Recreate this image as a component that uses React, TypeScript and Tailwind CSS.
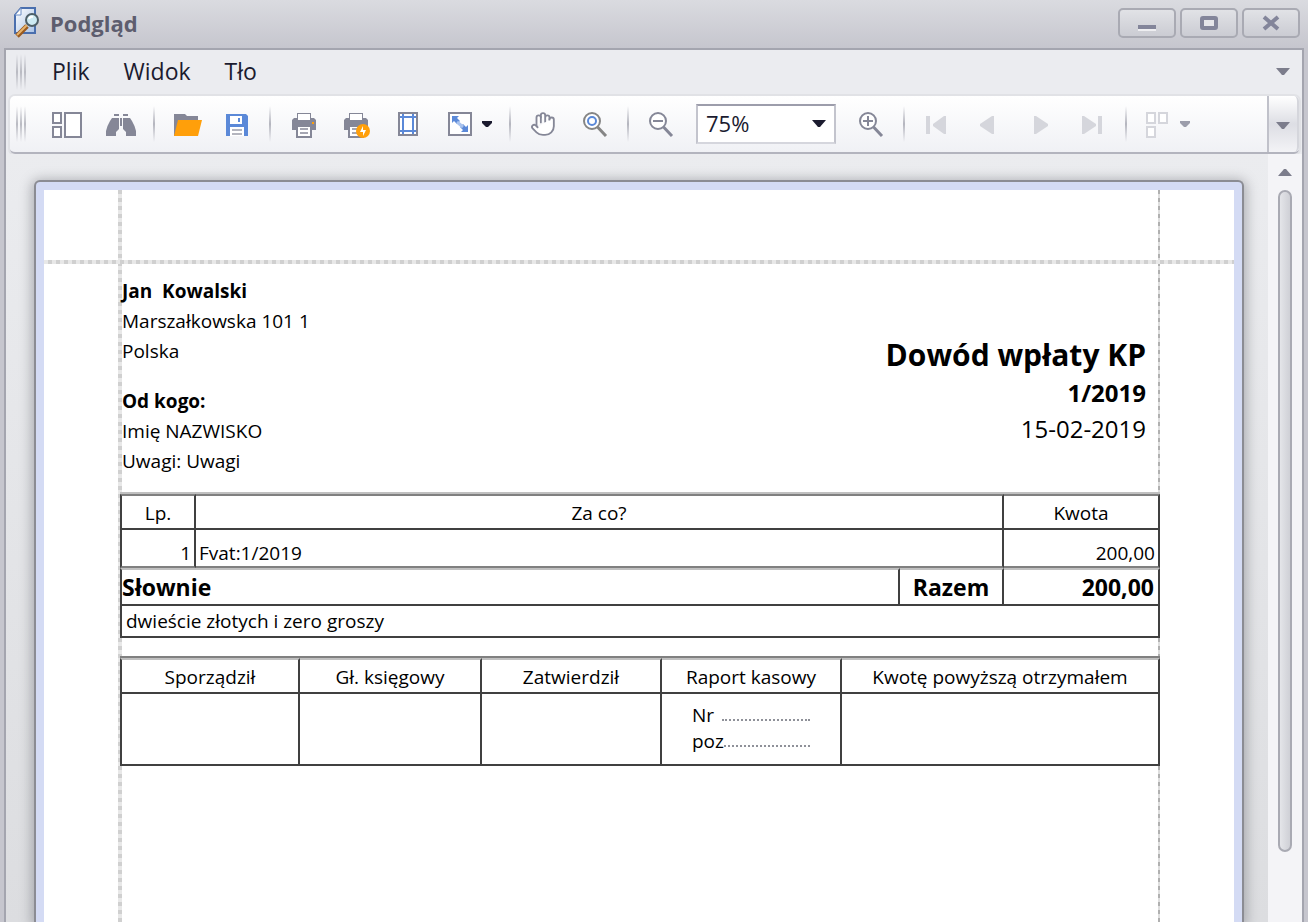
import React from 'react';
import { Hand } from 'lucide-react';

const Separator: React.FC = () => (
  <div className="mx-[17px] h-9 w-0.5 shrink-0 bg-linear-to-b from-transparent via-[#b4b5be] to-transparent"></div>
);

const Grip: React.FC = () => (
  <div className="flex h-9 shrink-0 gap-0.5">
    {Array.from({ length: 3 }).map((_, i) => (
      <div key={i} className="w-0.5 bg-linear-to-b from-transparent via-[#b9bac2] to-transparent"></div>
    ))}
  </div>
);

interface ToolButtonProps {
  label: string;
  children: React.ReactNode;
  disabled?: boolean;
}

const ToolButton: React.FC<ToolButtonProps> = ({ label, children, disabled }) => (
  <button type="button" aria-label={label} title={label} disabled={disabled} className="shrink-0">
    {children}
  </button>
);

const Icon: React.FC<{ children: React.ReactNode }> = ({ children }) => (
  <svg width="30" height="26" viewBox="0 0 30 26" fill="none" aria-hidden="true" className="mt-0.5">
    {children}
  </svg>
);

const SmallCaret: React.FC<{ color: string }> = ({ color }) => (
  <svg width="10" height="6" viewBox="0 0 10 6" aria-hidden="true">
    <path d="M0 0H10V2L6 6H4L0 2Z" fill={color} />
  </svg>
);

const Caret: React.FC<{ color: string; up?: boolean }> = ({ color, up }) => (
  <svg width="14" height="8" viewBox="0 0 14 8" aria-hidden="true">
    <path d={up ? 'M0 8H14L8 1H6Z' : 'M0 0H14L8 7H6Z'} fill={color} />
  </svg>
);

const PrinterShape: React.FC = () => (
  <>
    <path d="M4 6H7V1H21V6H24L26 8V18H2V8Z" fill="#858797" />
    <rect x="8" y="2" width="12" height="6" fill="#fff" />
    <path d="M7 14H21V25H7Z" fill="#fff" stroke="#858797" strokeWidth="2" />
    <path d="M10 17H18M10 21H18" stroke="#a5a6b2" strokeWidth="2" />
  </>
);

const Magnifier: React.FC<{ children?: React.ReactNode; color?: string }> = ({ children, color = '#858797' }) => (
  <Icon>
    <circle cx="12" cy="9" r="8" fill="#fff" stroke={color} strokeWidth="2" />
    <path d="M17.5 15L26 24" stroke={color} strokeWidth="3" />
    {children}
  </Icon>
);

const AppIcon: React.FC = () => (
  <svg width="28" height="32" viewBox="0 0 28 32" aria-hidden="true">
    <defs>
      <linearGradient id="sheet" x1="0" y1="0" x2="1" y2="1">
        <stop offset="0" stopColor="#ffffff" />
        <stop offset="1" stopColor="#a9c2e6" />
      </linearGradient>
    </defs>
    <path d="M9 1H23V26H3V8Z" fill="url(#sheet)" stroke="#4a6fae" strokeWidth="2" />
    <path d="M3 8H9V1Z" fill="#fff" stroke="#6a8cc4" strokeWidth="1" />
    <path d="M15 19L5 29" stroke="#9a5b20" strokeWidth="5" />
    <path d="M15 18L5 28" stroke="#e8b46c" strokeWidth="2" />
    <circle cx="20" cy="13" r="6" fill="#cdeaf3" stroke="#4e5f68" strokeWidth="2" />
    <path d="M17 12Q18 9 21 10" stroke="#fff" strokeWidth="2" fill="none" />
  </svg>
);

const TitleBar: React.FC = () => {
  const button =
    'flex h-[30px] w-[58px] items-center justify-center rounded-[5px] border-2 border-[#a9aab3] bg-linear-to-b from-[#e1e2e6] to-[#cbccd3]';
  return (
    <header className="flex h-12 shrink-0 items-center bg-linear-to-b from-[#dadbe0] to-[#c6c6ce] pr-2 pb-0.5 pl-3">
      <AppIcon />
      <h1 className="ml-2.5 flex-1 text-[22px] leading-7 font-bold text-[#5d5d6e]">Podgląd</h1>
      <div className="flex gap-1">
        <button type="button" aria-label="Minimalizuj" className={button}>
          <svg width="18" height="16" viewBox="0 0 18 16" aria-hidden="true">
            <path d="M0 14H18V16H0Z" fill="#eeeef1" />
            <path d="M0 10H18V14H0Z" fill="#83859a" />
          </svg>
        </button>
        <button type="button" aria-label="Maksymalizuj" className={button}>
          <svg width="18" height="16" viewBox="0 0 18 16" aria-hidden="true">
            <rect x="2" y="3" width="14" height="10" rx="1" fill="#e6e6ea" stroke="#83859a" strokeWidth="4" />
          </svg>
        </button>
        <button type="button" aria-label="Zamknij" className={button}>
          <svg width="20" height="16" viewBox="0 0 20 16" aria-hidden="true">
            <path d="M3 2L17 14M17 2L3 14" stroke="#83859a" strokeWidth="4" />
          </svg>
        </button>
      </div>
    </header>
  );
};

const MenuBar: React.FC = () => (
  <nav className="flex h-11 shrink-0 items-center bg-[#ebecf0] pr-3 pl-2.5 text-[#1b1b2f]">
    <Grip />
    <div className="mb-0.5 ml-[26px] flex flex-1 gap-[34px] text-[23px] leading-8">
      <button type="button">Plik</button>
      <button type="button">Widok</button>
      <button type="button">Tło</button>
    </div>
    <button type="button" aria-label="Więcej">
      <Caret color="#7c7d8c" />
    </button>
  </nav>
);

const Toolbar: React.FC = () => (
  <div className="mr-[3px] ml-1 flex h-[58px] shrink-0 rounded-[5px] border-b-2 border-[#b3b4be] bg-linear-to-b from-white to-[#f0f1f5] shadow-[0_0_0_2px_#e1e2e6]">
    <div className="flex min-w-0 flex-1 items-center pl-1.5">
      <Grip />
      <div className="ml-[26px] flex gap-6">
        <ToolButton label="Miniatury">
          <Icon>
            <path d="M1 1H9V11H1ZM1 15H9V25H1ZM13 1H29V25H13Z" fill="#fff" stroke="#858797" strokeWidth="2" />
          </Icon>
        </ToolButton>
        <ToolButton label="Znajdź">
          <Icon>
            <path
              d="M8 2H13V4H8ZM17 2H22V4H17ZM6 6H13V17L10 20V24H0V19Q1 14 4 9ZM24 6H17V17L20 20V24H30V19Q29 14 26 9ZM14 6H16V14H14Z"
              fill="#858797"
            />
          </Icon>
        </ToolButton>
      </div>
      <Separator />
      <div className="flex gap-5">
        <ToolButton label="Otwórz">
          <Icon>
            <path d="M2 2H13L15 4H26V14L6 24H2Z" fill="#858797" />
            <path d="M6 8H30L26 24H2Z" fill="#ff9f0a" />
          </Icon>
        </ToolButton>
        <ToolButton label="Zapisz">
          <Icon>
            <path d="M4 2H24L26 4V24H4Z" fill="#5b89d8" />
            <path d="M8 4H20V12H8ZM8 15H22V24H8Z" fill="#fff" />
            <path d="M16 6H18V10H16Z" fill="#5b89d8" />
            <path d="M10 18H20M10 22H20" stroke="#b4b5be" strokeWidth="2" />
          </Icon>
        </ToolButton>
      </div>
      <Separator />
      <div className="flex items-center gap-[22px]">
        <ToolButton label="Drukuj">
          <Icon>
            <g transform="translate(2 0)">
              <PrinterShape />
              <path d="M22 10H24V12H22Z" fill="#ff9f0a" />
            </g>
          </Icon>
        </ToolButton>
        <ToolButton label="Szybki wydruk">
          <Icon>
            <g transform="translate(2 0)">
              <PrinterShape />
              <circle cx="21" cy="19" r="7" fill="#ff9f0a" />
              <path d="M21 14L18 20H21V24L24 18H21Z" fill="#fff" />
            </g>
          </Icon>
        </ToolButton>
        <ToolButton label="Marginesy">
          <Icon>
            <path d="M7 1H25V23H7Z" fill="#fff" stroke="#858797" strokeWidth="2" />
            <path d="M11 2V22M21 2V22M8 5H24M8 19H24" stroke="#5b89d8" strokeWidth="2" />
          </Icon>
        </ToolButton>
        <div className="flex items-center gap-2">
          <ToolButton label="Skala">
            <Icon>
              <path d="M5 1H27V23H5Z" fill="#fff" stroke="#858797" strokeWidth="2" />
              <path d="M8 4H15L13 6L16 9L13 12L10 9L8 11ZM24 20H17L19 18L16 15L19 12L22 15L24 13Z" fill="#5b89d8" />
              <path d="M13 10L19 15" stroke="#a9c3ee" strokeWidth="3" />
            </Icon>
          </ToolButton>
          <ToolButton label="Opcje skali">
            <SmallCaret color="#1b1b2f" />
          </ToolButton>
        </div>
      </div>
      <Separator />
      <div className="flex gap-[22px]">
        <ToolButton label="Przesuń">
          <Hand width={30} height={26} color="#858797" fill="#fff" strokeWidth={1.7} aria-hidden="true" />
        </ToolButton>
        <ToolButton label="Lupa">
          <Magnifier color="#858585">
            <circle cx="12" cy="9" r="4" stroke="#5b89d8" strokeWidth="2" />
          </Magnifier>
        </ToolButton>
      </div>
      <Separator />
      <div className="flex items-center gap-5">
        <ToolButton label="Pomniejsz">
          <Magnifier>
            <path d="M7 9H17" stroke="#858797" strokeWidth="2" />
          </Magnifier>
        </ToolButton>
        <div className="relative">
          <select
            aria-label="Powiększenie"
            defaultValue="75%"
            className="h-10 w-[140px] appearance-none border-2 border-t-[#9c9dab] border-r-[#c3c4cd] border-b-[#d5d6dd] border-l-[#c3c4cd] bg-white pb-0.5 pl-2 text-[22px] leading-8 text-[#1b1b2f]"
          >
            <option>50%</option>
            <option>75%</option>
            <option>100%</option>
          </select>
          <span className="pointer-events-none absolute top-4 right-2.5 flex">
            <Caret color="#1b1b2f" />
          </span>
        </div>
        <ToolButton label="Powiększ">
          <Magnifier>
            <path d="M7 9H17M12 4V14" stroke="#858797" strokeWidth="2" />
          </Magnifier>
        </ToolButton>
      </div>
      <Separator />
      <div className="flex gap-[22px]">
        <ToolButton label="Pierwsza strona" disabled>
          <Icon>
            <path d="M4 4H8V22H4ZM24 4V22H22L11 14V12L22 4Z" fill="#d5d6dc" />
          </Icon>
        </ToolButton>
        <ToolButton label="Poprzednia strona" disabled>
          <Icon>
            <path d="M20 4V22H18L6 14V12L18 4Z" fill="#d5d6dc" />
          </Icon>
        </ToolButton>
        <ToolButton label="Następna strona" disabled>
          <Icon>
            <path d="M8 4V22H10L22 14V12L10 4Z" fill="#d5d6dc" />
          </Icon>
        </ToolButton>
        <ToolButton label="Ostatnia strona" disabled>
          <Icon>
            <path d="M4 4V22H6L18 14V12L6 4ZM20 4H24V22H20Z" fill="#d5d6dc" />
          </Icon>
        </ToolButton>
      </div>
      <Separator />
      <div className="flex items-center gap-1.5">
        <ToolButton label="Wiele stron" disabled>
          <Icon>
            <path d="M3 1H11V11H3ZM15 1H23V11H15ZM3 15H11V25H3Z" fill="#fff" stroke="#d5d6dc" strokeWidth="2" />
          </Icon>
        </ToolButton>
        <ToolButton label="Układ stron" disabled>
          <SmallCaret color="#9c9dab" />
        </ToolButton>
      </div>
    </div>
    <button
      type="button"
      aria-label="Opcje paska narzędzi"
      className="flex w-8 shrink-0 items-center justify-center rounded-r-[5px] border-r-2 border-l-2 border-r-[#d5d6dc] border-l-[#c0c1ca] bg-linear-to-b from-white via-[#dddee4] to-[#f3f3f6] pt-1"
    >
      <Caret color="#7c7d8c" />
    </button>
  </div>
);

const ReceiptTable: React.FC = () => (
  <table className="mt-4 w-full table-fixed border-separate border-spacing-0 border-t-2 border-[#c0c0c0] text-[19px] leading-6">
    <colgroup>
      <col className="w-[76px]" />
      <col />
      <col className="w-[104px]" />
      <col className="w-[156px]" />
    </colgroup>
    <thead>
      <tr className="h-9 *:border-t-2 *:border-r-2 *:border-b-2 *:border-[#404040] *:border-t-[#808080] *:p-0 *:pt-0.5 *:font-normal">
        <th className="border-l-2">Lp.</th>
        <th colSpan={2}>Za co?</th>
        <th>Kwota</th>
      </tr>
    </thead>
    <tbody>
      <tr className="h-[38px] *:border-r-2 *:border-b-2 *:border-[#404040] *:border-b-[#808080] *:px-[3px] *:pt-2.5 *:pb-0">
        <td className="border-l-2 text-right">1</td>
        <td colSpan={2}>Fvat:1/2019</td>
        <td className="text-right">200,00</td>
      </tr>
      <tr className="h-[38px] text-[23px] leading-8 font-bold *:border-t-2 *:border-r-2 *:border-b-2 *:border-[#404040] *:border-t-[#c0c0c0] *:p-0">
        <td colSpan={2} className="border-l-2">
          Słownie
        </td>
        <td className="text-center">Razem</td>
        <td className="text-right">
          <span className="pr-1">200,00</span>
        </td>
      </tr>
      <tr className="h-8">
        <td colSpan={4} className="border-x-2 border-b-2 border-[#404040] py-0 pr-0 pl-1">
          dwieście złotych i zero groszy
        </td>
      </tr>
    </tbody>
  </table>
);

const SignatureTable: React.FC = () => (
  <table className="mt-[18px] w-full table-fixed border-separate border-spacing-0 border-t-2 border-[#808080] text-[19px] leading-6">
    <colgroup>
      <col className="w-[180px]" />
      <col className="w-[182px]" />
      <col className="w-[180px]" />
      <col className="w-[180px]" />
      <col />
    </colgroup>
    <thead>
      <tr className="h-9 *:border-t-2 *:border-r-2 *:border-b-2 *:border-[#404040] *:border-t-[#c0c0c0] *:p-0 *:pt-0.5 *:font-normal">
        <th className="border-l-2">Sporządził</th>
        <th>Gł. księgowy</th>
        <th>Zatwierdził</th>
        <th>Raport kasowy</th>
        <th>Kwotę powyższą otrzymałem</th>
      </tr>
    </thead>
    <tbody>
      <tr className="h-[72px] *:border-r-2 *:border-b-2 *:border-[#404040] *:p-0">
        <td className="border-l-2"></td>
        <td></td>
        <td></td>
        <td>
          <div className="mx-[30px] mb-0.5">
            {['Nr', 'poz'].map((label) => (
              <div key={label} className="flex h-[26px] items-center">
                <span className={label === 'Nr' ? 'mr-2' : ''}>{label}</span>
                <span className="mt-2.5 flex-1 border-b-2 border-dotted border-[#8f9199]"></span>
              </div>
            ))}
          </div>
        </td>
        <td></td>
      </tr>
    </tbody>
  </table>
);

const PagePreview: React.FC = () => (
  <main className="min-w-0 flex-1 overflow-hidden bg-linear-to-b from-[#ebecef] to-[#dcdde0] pt-[26px] pr-6 pl-7">
    <div className="h-full rounded-t-[6px] border-2 border-b-0 border-[#8b8c93] bg-[#d4dbf4] px-2 pt-2 shadow-[0_2px_12px_3px_rgba(90,92,100,0.4)]">
      <article className="relative h-full bg-white pr-[74px] pl-[76px] text-black">
        {/* Margin guides */}
        <div className="absolute inset-y-0 left-[74px] w-1 bg-[repeating-linear-gradient(to_bottom,#d0d0d0_0_4px,#e8e8e8_4px_8px)]"></div>
        <div className="absolute inset-y-0 right-[74px] w-0.5 bg-[repeating-linear-gradient(to_bottom,#b0b0b0_0_4px,#dedede_4px_8px)]"></div>
        <div className="absolute inset-x-0 top-[70px] h-1 bg-[repeating-linear-gradient(to_right,#e8e8e8_0_4px,#d0d0d0_4px_8px)]"></div>

        <div className="relative pt-[86px]">
          <div className="flex justify-between">
            <div className="pl-0.5 text-[19px] leading-[30px]">
              <p className="font-bold whitespace-pre">Jan  Kowalski</p>
              <p>Marszałkowska 101 1</p>
              <p>Polska</p>
              <p className="mt-5 font-bold">Od kogo:</p>
              <p>Imię NAZWISKO</p>
              <p>Uwagi: Uwagi</p>
            </div>
            <div className="pt-[59px] pr-3.5 text-right">
              <h2 className="text-[30px] leading-10 font-bold">Dowód wpłaty KP</h2>
              <p className="text-[24px] leading-9 font-bold">1/2019</p>
              <p className="text-[24px] leading-9">15-02-2019</p>
            </div>
          </div>
          <ReceiptTable />
          <SignatureTable />
        </div>
      </article>
    </div>
  </main>
);

const App: React.FC = () => (
  <div className="flex h-screen flex-col overflow-hidden bg-[#c6c6ce] font-['Open_Sans','Noto_Sans',sans-serif]">
    <TitleBar />
    <div className="mx-1 flex min-h-0 flex-1 flex-col border-x-2 border-t-2 border-[#a4a5af] bg-[#ebecf0]">
      <MenuBar />
      <div className="h-0.5 shrink-0"></div>
      <Toolbar />
      <div className="flex min-h-0 flex-1">
        <PagePreview />
        <div className="flex w-[34px] shrink-0 flex-col items-center bg-[#f4f4f7] pt-3.5">
          <button type="button" aria-label="Przewiń w górę">
            <Caret color="#7c7d8c" up />
          </button>
          <div className="mt-3.5 mb-[70px] w-3.5 flex-1 rounded-full border-2 border-[#a9aab3] bg-linear-to-r from-[#e4e5e9] to-[#cfd0d6]"></div>
        </div>
      </div>
    </div>
  </div>
);

export default App;
